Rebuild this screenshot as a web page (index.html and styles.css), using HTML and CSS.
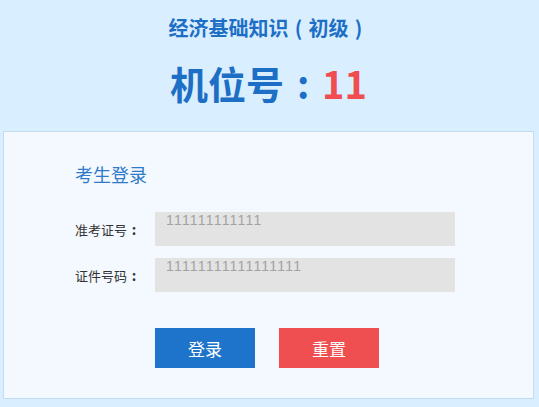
FILE: index.html
```html
<!DOCTYPE html>
<html lang="zh-CN">
<head>
<meta charset="utf-8">
<title>考生登录</title>
<link rel="stylesheet" href="styles.css">
</head>
<body>
<div class="page">
  <header class="header">
    <h1 class="subject">经济基础知识<span class="punct">(</span>初级<span class="punct">)</span></h1>
    <div class="seat">机位号<span class="punct">:</span><span class="seat-num">11</span></div>
  </header>
  <section class="card">
    <h2 class="card-title">考生登录</h2>
    <div class="form">
      <div class="row">
        <span class="label">准考证号<span class="punct">:</span></span>
        <div class="field">111111111111</div>
      </div>
      <div class="row">
        <span class="label">证件号码<span class="punct">:</span></span>
        <div class="field">11111111111111111</div>
      </div>
    </div>
    <div class="actions">
      <button class="btn btn-login" type="button">登录</button>
      <button class="btn btn-reset" type="button">重置</button>
    </div>
  </section>
</div>
</body>
</html>
```

FILE: styles.css
```css
html, body {
  margin: 0;
  padding: 0;
  height: 100%;
}
body {
  background: #d9eefe;
  font-family: "Noto Sans CJK SC", "Noto Sans", sans-serif;
}
.page {
  padding: 0 5px 0 3px;
}
.punct {
  display: inline-block;
  width: 1em;
  text-align: center;
}
.label .punct {
  font-size: 14px;
  font-weight: bold;
}
.header {
  text-align: center;
  padding-top: 17px;
}
.subject {
  margin: 0;
  font-size: 20px;
  line-height: 22px;
  font-weight: bold;
  color: #1d6fc6;
}
.seat {
  margin-top: 24px;
  font-size: 38px;
  line-height: 40px;
  font-weight: bold;
  color: #1d6fc6;
}
.seat-num {
  color: #ef4d4f;
}
.card {
  margin-top: 28px;
  border: 1px solid #c3dcf1;
  background: #f4f9ff;
  padding: 32px 0 30px 71px;
}
.card-title {
  margin: 0;
  font-size: 18px;
  line-height: 20px;
  font-weight: normal;
  color: #2f7bc9;
}
.form {
  margin-top: 28px;
  display: flex;
  flex-direction: column;
  gap: 12px;
}
.row {
  display: flex;
  align-items: center;
}
.label {
  width: 80px;
  font-size: 13px;
  color: #333;
}
.field {
  width: 289px;
  height: 34px;
  padding-left: 11px;
  background: #e3e3e3;
  font-family: "Liberation Sans", "Noto Sans CJK SC", sans-serif;
  font-size: 14px;
  letter-spacing: 1.2px;
  line-height: 16px;
  color: #a2a2a2;
}
.actions {
  margin-top: 36px;
  padding-left: 80px;
  display: flex;
  gap: 24px;
}
.btn {
  width: 100px;
  height: 40px;
  border: 0;
  padding: 0;
  color: #fff;
  font-family: "Noto Sans CJK SC", sans-serif;
  font-size: 17px;
  cursor: pointer;
}
.btn-login {
  background: #1e74cb;
}
.btn-reset {
  background: #ef4f50;
}
```
